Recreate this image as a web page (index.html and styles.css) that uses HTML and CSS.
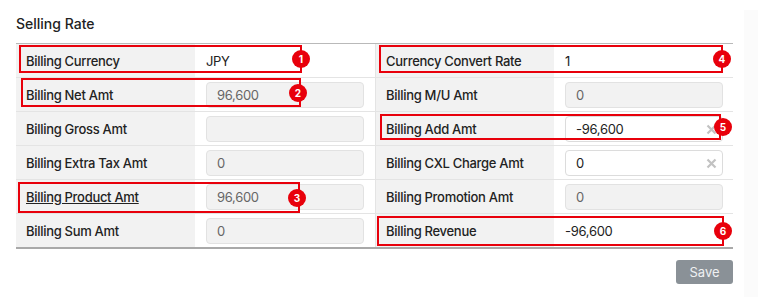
FILE: index.html
```html
<!DOCTYPE html>
<html lang="en">
<head>
    <meta charset="UTF-8">
    <meta name="viewport" content="width=device-width, initial-scale=1.0">
    <title>Selling Rate</title>
    <link rel="stylesheet" href="styles.css">
</head>
<body>

<div class="page">
    <div class="card">
        <h3 class="title">Selling Rate</h3>

        <div class="sheet">
            <div class="row">
                <div class="label">Billing Currency</div>
                <div class="value"><span class="plain">JPY</span></div>
                <div class="label">Currency Convert Rate</div>
                <div class="value"><span class="plain">1</span></div>
            </div>
            <div class="row">
                <div class="label">Billing Net Amt</div>
                <div class="value"><div class="field disabled">96,600</div></div>
                <div class="label">Billing M/U Amt</div>
                <div class="value"><div class="field disabled">0</div></div>
            </div>
            <div class="row">
                <div class="label">Billing Gross Amt</div>
                <div class="value"><div class="field disabled"></div></div>
                <div class="label">Billing Add Amt</div>
                <div class="value">
                    <div class="field editable">-96,600
                        <svg class="clear" width="11" height="11" viewBox="0 0 11 11"><path d="M1.5 1.5L9.5 9.5M9.5 1.5L1.5 9.5" stroke="#c2c2c2" stroke-width="2.2"/></svg>
                    </div>
                </div>
            </div>
            <div class="row">
                <div class="label">Billing Extra Tax Amt</div>
                <div class="value"><div class="field disabled">0</div></div>
                <div class="label">Billing CXL Charge Amt</div>
                <div class="value">
                    <div class="field editable">0
                        <svg class="clear" width="11" height="11" viewBox="0 0 11 11"><path d="M1.5 1.5L9.5 9.5M9.5 1.5L1.5 9.5" stroke="#c2c2c2" stroke-width="2.2"/></svg>
                    </div>
                </div>
            </div>
            <div class="row">
                <div class="label"><u>Billing Product Amt</u></div>
                <div class="value"><div class="field disabled">96,600</div></div>
                <div class="label">Billing Promotion Amt</div>
                <div class="value"><div class="field disabled">0</div></div>
            </div>
            <div class="row last">
                <div class="label">Billing Sum Amt</div>
                <div class="value"><div class="field disabled">0</div></div>
                <div class="label">Billing Revenue</div>
                <div class="value"><span class="plain">-96,600</span></div>
            </div>

            <!-- annotation overlays -->
            <div class="mark mark-1"><span class="badge">1</span></div>
            <div class="mark mark-2"><span class="badge">2</span></div>
            <div class="mark mark-3"><span class="badge">3</span></div>
            <div class="mark mark-4"><span class="badge">4</span></div>
            <div class="mark mark-5"><span class="badge">5</span></div>
            <div class="mark mark-6"><span class="badge">6</span></div>
        </div>

        <div class="actions">
            <button class="save">Save</button>
        </div>
    </div>
    <div class="rail"></div>
</div>
<div class="band"></div>

</body>
</html>
```

FILE: styles.css
```css
body {
    font-family: 'Inter', 'Liberation Sans', sans-serif;
    background-color: #ffffff;
    color: #222;
    margin: 0;
    font-size: 13px;
    letter-spacing: -0.3px;
}

.page {
    display: flex;
}

.card {
    width: 744px;
    height: 288px;
    background: #fff;
    padding: 14px 11px 0 16px;
    box-sizing: border-box;
}

.rail {
    width: 14px;
    margin-top: 10px;
    height: 287px;
    background: #fbfbfb;
}

.band {
    width: 744px;
    height: 9px;
    background: #fafafa;
}

.title {
    margin: 0 0 9px 0;
    font-size: 14px;
    line-height: 20px;
    font-weight: 500;
    letter-spacing: 0;
    color: #222;
}

.sheet {
    position: relative;
    border-top: 1px solid #b9b9b9;
    border-bottom: 2px solid #a9a9a9;
}

.row {
    display: grid;
    grid-template-columns: 179px 180px 179px 179px;
    height: 34px;
    border-bottom: 1px solid #e4e4e4;
    box-sizing: border-box;
}

.row.last {
    border-bottom: none;
    height: 33px;
}

.label {
    background: #f2f2f2;
    display: flex;
    align-items: center;
    padding-left: 10px;
    font-weight: 500;
    color: #222;
}

.value {
    background: #fff;
    display: flex;
    align-items: center;
    padding-left: 11px;
}

.value + .label {
    border-left: 1px solid #e4e4e4;
}

.plain {
    color: #222;
}

.field {
    width: 158px;
    height: 26px;
    box-sizing: border-box;
    border-radius: 4px;
    display: flex;
    align-items: center;
    padding-left: 10px;
    position: relative;
}

.field.disabled {
    background: #f2f2f2;
    border: 1px solid #e2e2e2;
    color: #666;
}

.field.editable {
    background: #fff;
    border: 1px solid #dcdcdc;
    color: #222;
}

.clear {
    position: absolute;
    right: 5px;
    top: 7px;
}

.mark {
    position: absolute;
    border: 2px solid #e8000b;
    box-sizing: border-box;
}

.badge {
    position: absolute;
    right: -10px;
    top: 50%;
    margin-top: -9px;
    width: 18px;
    height: 18px;
    border-radius: 50%;
    background: #e8000b;
    color: #fff;
    font-size: 10px;
    font-weight: 700;
    letter-spacing: 0;
    display: flex;
    align-items: center;
    justify-content: center;
}

.mark-1 { left: 3px; top: 1px; width: 283px; height: 28px; }
.mark-2 { left: 5px; top: 34px; width: 280px; height: 29px; }
.mark-3 { left: 2px; top: 138px; width: 282px; height: 31px; }
.mark-4 { left: 363px; top: 1px; width: 344px; height: 28px; }
.mark-5 { left: 364px; top: 70px; width: 341px; height: 26px; }
.mark-6 { left: 361px; top: 172px; width: 347px; height: 30px; }

.mark-2 .badge, .mark-3 .badge { right: -8px; }
.mark-5 .badge { right: -13px; }

.actions {
    display: flex;
    justify-content: flex-end;
    padding-top: 11px;
}

.save {
    background-color: #8a9197;
    color: #eef0f2;
    border: none;
    width: 57px;
    height: 24px;
    border-radius: 3px;
    font-family: inherit;
    font-size: 13px;
    letter-spacing: 0;
    cursor: pointer;
}
```
